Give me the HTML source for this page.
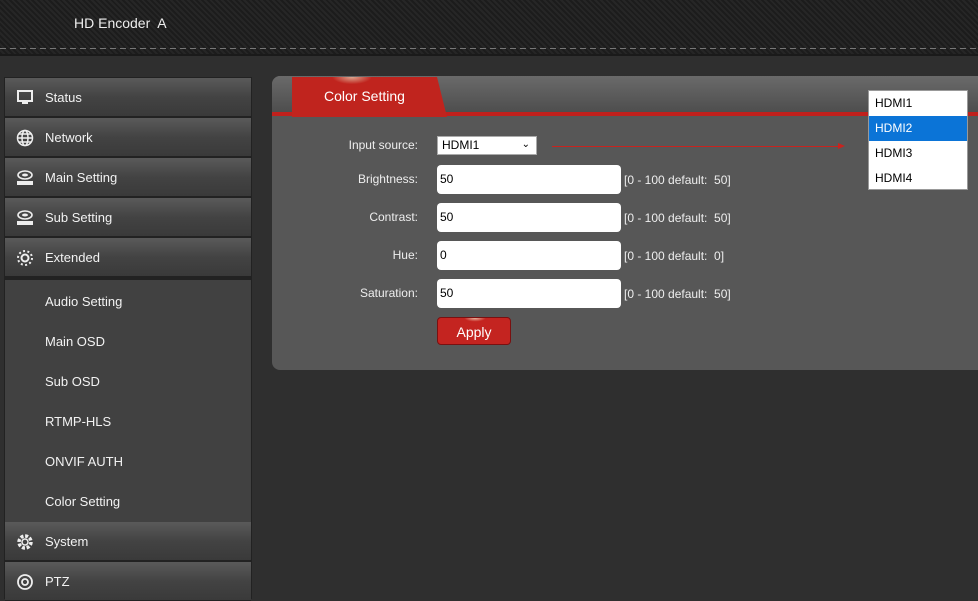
<!DOCTYPE html>
<html><head><style>
*{margin:0;padding:0;box-sizing:border-box}
body{width:978px;height:599px;overflow:hidden;background:#2f2f2f;font-family:"Liberation Sans",Arial,sans-serif;position:relative;color:#fff}
.hdr{position:absolute;left:0;top:0;width:978px;height:56px;background:repeating-linear-gradient(45deg,#1c1c1c 0 2px,#262626 2px 4px);border-bottom:2px solid #1a1a1a}
.hdr .t{position:absolute;left:74px;top:15px;font-size:14px;color:#eee}
.dash{position:absolute;left:0;top:48px;width:978px;height:1px;background:repeating-linear-gradient(90deg,#777 0 6px,transparent 6px 10px)}
.side{position:absolute;left:4px;top:77px;width:248px;height:522px;background:#222}
.it{position:absolute;left:1px;width:246px;height:39px;background:linear-gradient(#5a5a5a,#434343 50%,#3a3a3a);font-size:13px;color:#f2f2f2;line-height:39px;padding-left:40px;border-bottom:1px solid #222}
.it svg{position:absolute;left:11px;top:11px}
.sub{position:absolute;left:1px;top:203px;width:246px;height:242px;background:#414141}
.sub div{height:40px;line-height:44px;padding-left:40px;font-size:13px;color:#f2f2f2}
.panel{position:absolute;left:272px;top:76px;width:720px;height:294px;background:#575757;border-radius:8px;overflow:hidden}
.ph{height:40px;background:linear-gradient(#6a6a6a,#4e4e4e);border-bottom:4px solid #c0201c}
.tab{position:absolute;left:20px;top:1px;width:155px;height:40px;background:radial-gradient(ellipse 22px 8px at 60px 0px,#dca890,#c0241e 90%);clip-path:polygon(0 0,145px 0,155px 40px,0 40px);font-size:14px;line-height:38px;padding-left:32px}
.lbl{position:absolute;font-size:12px;color:#eee;text-align:right;width:150px;left:268px}
.in{position:absolute;left:437px;width:184px;height:29px;background:#fff;border-radius:4px;color:#000;font-size:12px;line-height:29px;padding-left:3px}
.hint{position:absolute;left:624px;font-size:12px;color:#eee}
</style></head><body>
<div class="hdr"><div class="t">HD Encoder&nbsp; A</div><div class="dash"></div></div>
<div class="side">
<div class="it" style="top:1px"><svg width="18" height="18" viewBox="0 0 18 18"><rect x="2" y="2" width="14" height="10" fill="none" stroke="#eee" stroke-width="2"/><rect x="6" y="13" width="6" height="2" fill="#eee"/></svg>Status</div>
<div class="it" style="top:41px"><svg width="18" height="18" viewBox="0 0 18 18" fill="none" stroke="#eee" stroke-width="1.5"><circle cx="9" cy="9" r="7.5"/><ellipse cx="9" cy="9" rx="3" ry="7.5"/><path d="M1.5 9h15M3 5h12M3 13h12"/></svg>Network</div>
<div class="it" style="top:81px"><svg width="18" height="18" viewBox="0 0 18 18"><ellipse cx="9" cy="6" rx="7" ry="4" fill="none" stroke="#eee" stroke-width="1.6"/><ellipse cx="9" cy="6" rx="3" ry="1.5" fill="#eee"/><rect x="1" y="12" width="16" height="4" fill="#eee"/></svg>Main Setting</div>
<div class="it" style="top:121px"><svg width="18" height="18" viewBox="0 0 18 18"><ellipse cx="9" cy="6" rx="7" ry="4" fill="none" stroke="#eee" stroke-width="1.6"/><ellipse cx="9" cy="6" rx="3" ry="1.5" fill="#eee"/><rect x="1" y="12" width="16" height="4" fill="#eee"/></svg>Sub Setting</div>
<div class="it" style="top:161px"><svg width="18" height="18" viewBox="0 0 18 18"><circle cx="9" cy="9" r="3.5" fill="none" stroke="#eee" stroke-width="2"/><circle cx="9" cy="9" r="7" fill="none" stroke="#eee" stroke-width="2" stroke-dasharray="2 2.4"/></svg>Extended</div>
<div class="sub"><div>Audio Setting</div><div>Main OSD</div><div>Sub OSD</div><div>RTMP-HLS</div><div>ONVIF AUTH</div><div>Color Setting</div></div>
<div class="it" style="top:445px"><svg width="18" height="18" viewBox="0 0 18 18"><circle cx="9" cy="9" r="6" fill="none" stroke="#eee" stroke-width="3.5" stroke-dasharray="3 1.7"/><circle cx="9" cy="9" r="3" fill="none" stroke="#eee" stroke-width="1.5"/></svg>System</div>
<div class="it" style="top:485px"><svg width="18" height="18" viewBox="0 0 18 18"><circle cx="9" cy="9" r="7" fill="none" stroke="#eee" stroke-width="1.8"/><circle cx="9" cy="9" r="3" fill="none" stroke="#eee" stroke-width="1.8"/></svg>PTZ</div>
</div>
<div class="panel"><div class="ph"></div><div class="tab">Color Setting</div></div>
<div class="lbl" style="top:138px">Input source:</div>
<div style="position:absolute;left:437px;top:136px;width:100px;height:19px;background:#fff;border:1px solid #aaa;color:#000;font-size:12px;line-height:17px;padding-left:4px">HDMI1<span style="position:absolute;right:6px;top:-1px;font-size:10px">&#8964;</span></div>
<div style="position:absolute;left:552px;top:146px;width:290px;border-top:1px solid #c8231e"></div>
<div style="position:absolute;left:838px;top:143px;border-left:7px solid #c8231e;border-top:3px solid transparent;border-bottom:3px solid transparent"></div>
<div class="lbl" style="top:172px">Brightness:</div><div class="in" style="top:165px">50</div><div class="hint" style="top:173px">[0 - 100 default:&nbsp; 50]</div>
<div class="lbl" style="top:210px">Contrast:</div><div class="in" style="top:203px">50</div><div class="hint" style="top:211px">[0 - 100 default:&nbsp; 50]</div>
<div class="lbl" style="top:248px">Hue:</div><div class="in" style="top:241px">0</div><div class="hint" style="top:249px">[0 - 100 default:&nbsp; 0]</div>
<div class="lbl" style="top:286px">Saturation:</div><div class="in" style="top:279px">50</div><div class="hint" style="top:287px">[0 - 100 default:&nbsp; 50]</div>
<div style="position:absolute;left:437px;top:317px;width:74px;height:28px;border-radius:4px;border:1px solid #7a1010;background:radial-gradient(ellipse 12px 4px at 37px 0px,#e8b8a0,#c42420 90%);font-size:14px;text-align:center;line-height:28px">Apply</div>
<div style="position:absolute;left:868px;top:90px;width:100px;height:100px;background:#fff;border:1px solid #999;color:#000;font-size:12px">
<div style="height:25px;line-height:24px;padding-left:6px">HDMI1</div>
<div style="height:25px;line-height:24px;padding-left:6px;background:#0b74d7;color:#fff">HDMI2</div>
<div style="height:25px;line-height:24px;padding-left:6px">HDMI3</div>
<div style="height:24px;line-height:24px;padding-left:6px">HDMI4</div></div>
</body></html>
